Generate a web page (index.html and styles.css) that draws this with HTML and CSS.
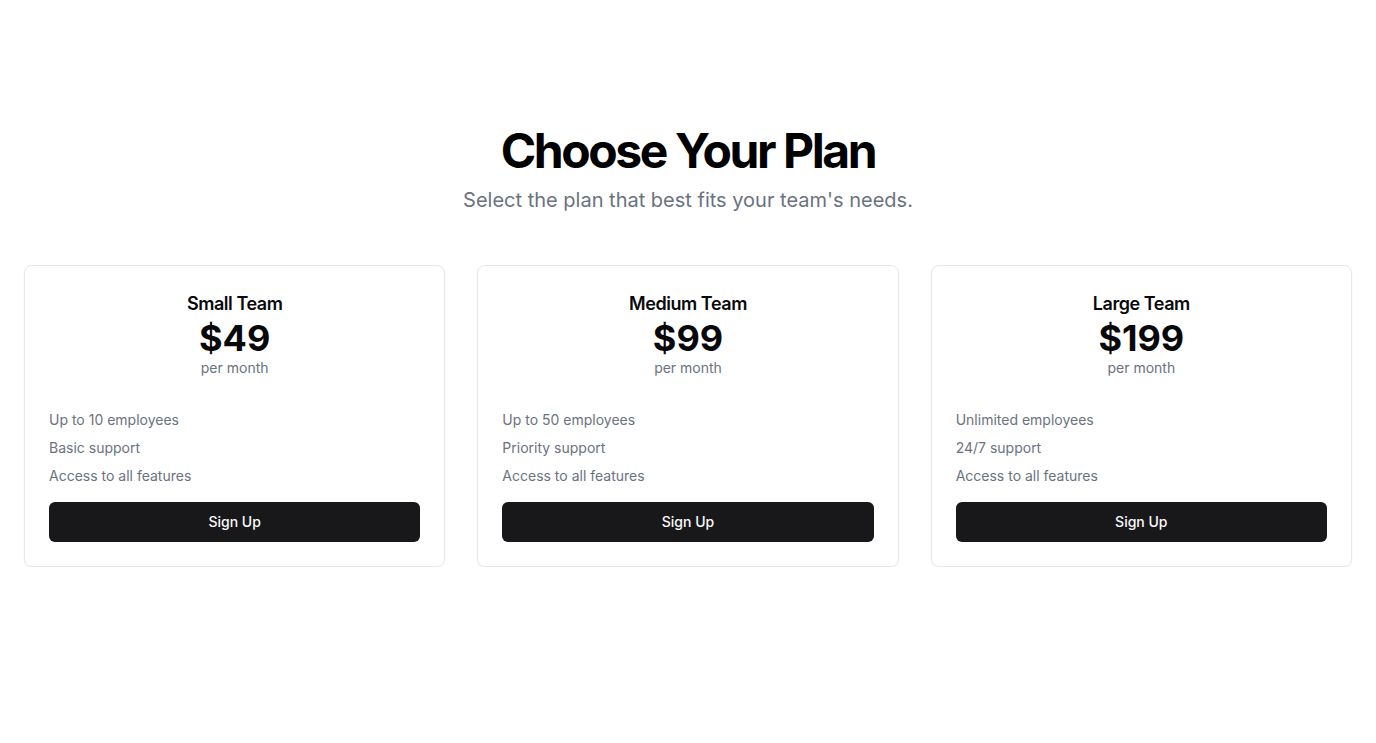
FILE: index.html
```html
<!DOCTYPE html>
<html lang="en">
<head>
<meta charset="utf-8">
<title>Choose Your Plan</title>
<link rel="stylesheet" href="styles.css">
</head>
<body>
<main class="page">
  <header class="intro">
    <h1 class="title">Choose Your Plan</h1>
    <p class="subtitle">Select the plan that best fits your team's needs.</p>
  </header>
  <section class="plans">
    <article class="card">
      <div class="card-head">
        <h2 class="plan-name">Small Team</h2>
        <div class="price">$49</div>
        <div class="period">per month</div>
      </div>
      <ul class="features">
        <li>Up to 10 employees</li>
        <li>Basic support</li>
        <li>Access to all features</li>
      </ul>
      <button class="btn">Sign Up</button>
    </article>
    <article class="card">
      <div class="card-head">
        <h2 class="plan-name">Medium Team</h2>
        <div class="price">$99</div>
        <div class="period">per month</div>
      </div>
      <ul class="features">
        <li>Up to 50 employees</li>
        <li>Priority support</li>
        <li>Access to all features</li>
      </ul>
      <button class="btn">Sign Up</button>
    </article>
    <article class="card">
      <div class="card-head">
        <h2 class="plan-name">Large Team</h2>
        <div class="price">$199</div>
        <div class="period">per month</div>
      </div>
      <ul class="features">
        <li>Unlimited employees</li>
        <li>24/7 support</li>
        <li>Access to all features</li>
      </ul>
      <button class="btn">Sign Up</button>
    </article>
  </section>
</main>
</body>
</html>
```

FILE: styles.css
```css
* { box-sizing: border-box; }
html, body { margin: 0; padding: 0; background: #ffffff; }
body {
  font-family: Inter, "Noto Sans", "Liberation Sans", sans-serif;
  color: #09090b;
}
.page {
  padding: 127px 24px 0;
}
.intro {
  text-align: center;
}
.title {
  margin: 0;
  font-size: 48px;
  line-height: 48px;
  font-weight: 700;
  letter-spacing: -0.05em;
  color: #000;
}
.subtitle {
  margin: 11px 0 0;
  font-size: 20px;
  line-height: 28px;
  color: #6b7280;
}
.plans {
  margin-top: 51px;
  display: grid;
  grid-template-columns: repeat(3, 1fr);
  gap: 32px;
}
.card {
  border: 1px solid #e5e7eb;
  border-radius: 8px;
  box-shadow: 0 1px 2px rgba(0,0,0,0.05);
  padding: 24px 24px 24px;
  display: flex;
  flex-direction: column;
}
.card-head {
  text-align: center;
}
.plan-name {
  margin: 0;
  font-size: 18px;
  line-height: 28px;
  font-weight: 600;
  letter-spacing: -0.025em;
}
.price {
  font-size: 36px;
  line-height: 40px;
  font-weight: 700;
}
.period {
  font-size: 14px;
  line-height: 20px;
  color: #6b7280;
}
.features {
  list-style: none;
  margin: 32px 0 0;
  padding: 0;
  display: flex;
  flex-direction: column;
  gap: 8px;
}
.features li {
  font-size: 14px;
  line-height: 20px;
  color: #6b7280;
}
.btn {
  margin-top: 16px;
  height: 40px;
  border: none;
  border-radius: 6px;
  background: #18181b;
  color: #fafafa;
  font-family: inherit;
  font-size: 14px;
  font-weight: 500;
  line-height: 20px;
  padding: 0;
  cursor: pointer;
}
```
